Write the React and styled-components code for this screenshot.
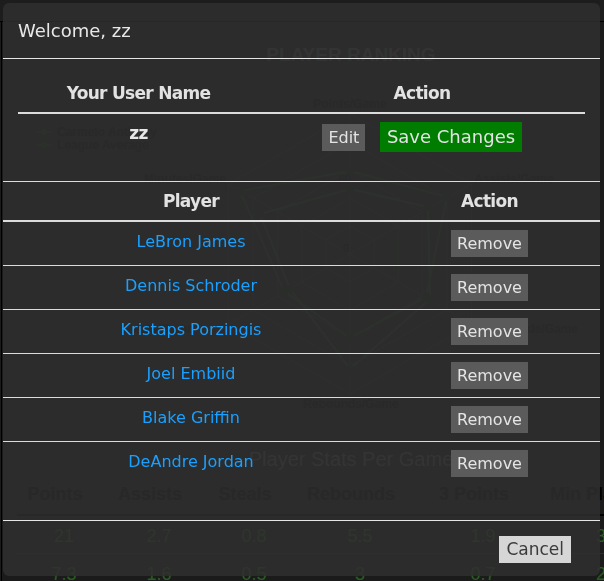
import React from 'react';
import styled, { createGlobalStyle } from 'styled-components';

const GlobalStyle = createGlobalStyle`
  html, body {
    margin: 0;
    padding: 0;
    height: 100%;
    overflow: hidden;
    background: #363636;
  }
  body {
    font-family: "DejaVu Sans", Verdana, sans-serif;
  }
  * { box-sizing: border-box; }
`;

/* ---------- page behind the modal ---------- */

const Page = styled.div`
  width: 700px;
  min-height: 600px;
`;

const NavBar = styled.div`
  height: 22px;
  background: #3a3a3a;
  border-bottom: 1px solid #000;
`;

const Main = styled.main`
  margin-left: 1px;
  border-left: 1px solid #000;
  padding: 0 15px;
  min-height: 578px;
  font-family: "Liberation Sans", Arial, sans-serif;
`;

const RankingTitle = styled.h2`
  margin: 0;
  padding-top: 22px;
  height: 44px;
  line-height: 22px;
  text-align: center;
  font-size: 19px;
  font-weight: bold;
  color: #a0a0a0;
`;

const ChartSvg = styled.svg`
  display: block;
  width: 668px;
  height: 370px;
`;

const StatsTitle = styled.h3`
  margin: 11px 0 0;
  line-height: 24px;
  text-align: center;
  font-size: 20px;
  font-weight: normal;
  color: #a8a8a8;
`;

const StatsGrid = styled.div`
  display: grid;
  grid-template-columns: 94px 96px 94px 118px 128px 118px;
`;

const StatsHead = styled.div`
  padding: 11px 18px 8px 0;
  line-height: 24px;
  text-align: center;
  white-space: nowrap;
  font-size: 18px;
  font-weight: bold;
  color: #000;
  border-bottom: 2px solid #000;
`;

const StatsValue = styled.div`
  padding: 9px 0 6px;
  line-height: 22px;
  text-align: center;
  font-size: 18px;
  color: #55b845;
  border-bottom: 1px solid #5a5a5a;
`;

const R = 140;
const CX = 333;
const CY = 188;
const ring = (r) =>
  [-90, -30, 30, 90, 150, 210]
    .map((a) => {
      const t = (a * Math.PI) / 180;
      return `${(CX + r * Math.cos(t)).toFixed(1)},${(CY + r * Math.sin(t)).toFixed(1)}`;
    })
    .join(' ');

const playerPts = [[333, 105], [430, 131], [409, 231], [333, 272], [267, 225], [223, 125]];
const leaguePts = [[333, 123], [411, 141], [413, 233], [333, 303], [273, 223], [243, 148]];

function RadarChart() {
  return (
    <ChartSvg viewBox="0 0 668 370">
      {[28, 56, 84, 112, 140].map((r) => (
        <polygon key={r} points={ring(r)} fill="none" stroke="#4e604e" strokeWidth="1" />
      ))}
      {ring(R).split(' ').map((p) => {
        const [x, y] = p.split(',');
        return <line key={p} x1={CX} y1={CY} x2={x} y2={y} stroke="#4e604e" strokeWidth="1" />;
      })}
      <polygon points={leaguePts.map((p) => p.join(',')).join(' ')} fill="none" stroke="#4f7f4f" strokeWidth="2" />
      <polygon points={playerPts.map((p) => p.join(',')).join(' ')} fill="none" stroke="#3c7a3c" strokeWidth="2" />
      {[...playerPts, ...leaguePts].map(([x, y], i) => (
        <circle key={i} cx={x} cy={y} r="4" fill="#1f4f1f" />
      ))}
      <g fontFamily="Liberation Sans, Arial, sans-serif" fontSize="12" fontWeight="bold" fill="#101010">
        <text x="333" y="42" textAnchor="middle">Points/Game</text>
        <text x="168" y="117" textAnchor="middle">Minutes/Game</text>
        <text x="497" y="117" textAnchor="middle">Assists/Game</text>
        <text x="561" y="267" textAnchor="end">Threes Made/Game</text>
        <text x="105" y="267">Steals/Game</text>
        <text x="334" y="342" textAnchor="middle">Rebounds/Game</text>
        <text x="322" y="117" fontWeight="normal" fontSize="11">60</text>
        <text x="326" y="186" fontWeight="normal" fontSize="11">0</text>
        <line x1="20" y1="66" x2="35" y2="66" stroke="#2f6f2f" strokeWidth="2" />
        <circle cx="27.5" cy="66" r="3" fill="#2f6f2f" />
        <text x="40" y="70">Carmelo Anthony</text>
        <line x1="20" y1="79" x2="35" y2="79" stroke="#2f6f2f" strokeWidth="2" />
        <circle cx="27.5" cy="79" r="3" fill="#2f6f2f" />
        <text x="40" y="83">League Average</text>
      </g>
    </ChartSvg>
  );
}

const statHeads = ['Points', 'Assists', 'Steals', 'Rebounds', '3 Points', 'Min Played'];
const statRows = [
  ['21', '2.7', '0.8', '5.5', '1.9', '32'],
  ['7.3', '1.6', '0.5', '3', '0.7', '20'],
];

/* ---------- modal ---------- */

const Backdrop = styled.div`
  position: fixed;
  inset: 0;
  background: rgba(0, 0, 0, 0.5);
  padding: 3px 4px 5px 3px;
`;

const Dialog = styled.div`
  width: 597px;
  background: rgba(46, 46, 46, 0.86);
  border-radius: 6px;
  color: #e2e2e2;
  font-family: "DejaVu Sans", Verdana, sans-serif;
`;

const DialogHeader = styled.div`
  padding: 15px;
  border-bottom: 1px solid #e6e6e6;
`;

const Title = styled.h4`
  margin: 0;
  font-size: 18px;
  line-height: 25px;
  font-weight: normal;
  color: #e8e8e8;
`;

const UserSection = styled.div`
  padding: 15px 15px 21px;
`;

const Table = styled.div`
  display: grid;
  grid-template-columns: ${(p) => p.$cols};
`;

const HeadCell = styled.div`
  padding: 8px 8px 7px;
  line-height: 23px;
  text-align: center;
  font-size: 17px;
  font-weight: bold;
  letter-spacing: -0.7px;
  color: #e2e2e2;
  border-bottom: 2px solid #dcdcdc;
`;

const Cell = styled.div`
  display: flex;
  justify-content: center;
  align-items: ${(p) => (p.$middle ? 'center' : 'flex-start')};
  gap: 15px;
  padding: 8px;
  line-height: 23px;
  border-top: ${(p) => (p.$lined ? '1px solid #dcdcdc' : 'none')};
`;

const UserName = styled.span`
  font-size: 17px;
  font-weight: bold;
  letter-spacing: -0.7px;
  color: #e6e6e6;
`;

const Button = styled.button`
  border: 0;
  border-radius: 0;
  margin: 0;
  font-family: inherit;
  cursor: pointer;
  background: ${(p) => (p.$variant === 'save' ? '#007d00' : p.$variant === 'cancel' ? '#d6d6d6' : '#5b5b5b')};
  color: ${(p) => (p.$variant === 'cancel' ? '#3a3a3a' : '#e4e4e4')};
  font-size: ${(p) => (p.$variant === 'save' ? '18px' : p.$variant === 'cancel' ? '17px' : '16px')};
  height: ${(p) => (p.$variant === 'save' ? '30px' : '27px')};
  line-height: ${(p) => (p.$variant === 'save' ? '30px' : '27px')};
  padding: 0 ${(p) => (p.$variant === 'save' ? '6.5px' : p.$variant === 'cancel' ? '7px' : '6px')};
`;

const PlayerSection = styled.div`
  border-top: 1px solid #dcdcdc;
  margin-bottom: 35px;
`;

const PlayerLink = styled.a`
  font-size: 16px;
  color: #1aa0ff;
  text-decoration: none;
`;

const DialogFooter = styled.div`
  display: flex;
  justify-content: flex-end;
  padding: 15px 29px 13px 15px;
  border-top: 1px solid #e6e6e6;
`;

const players = [
  'LeBron James',
  'Dennis Schroder',
  'Kristaps Porzingis',
  'Joel Embiid',
  'Blake Griffin',
  'DeAndre Jordan',
];

export default function App() {
  return (
    <>
      <GlobalStyle />
      <Page>
        <NavBar />
        <Main>
          <RankingTitle>PLAYER RANKING</RankingTitle>
          <RadarChart />
          <StatsTitle>Player Stats Per Game</StatsTitle>
          <StatsGrid>
            {statHeads.map((h) => (
              <StatsHead key={h}>{h}</StatsHead>
            ))}
            {statRows.map((row, i) =>
              row.map((v, j) => <StatsValue key={`${i}-${j}`}>{v}</StatsValue>)
            )}
          </StatsGrid>
        </Main>
      </Page>

      <Backdrop>
        <Dialog>
          <DialogHeader>
            <Title>Welcome, zz</Title>
          </DialogHeader>

          <UserSection>
            <Table $cols="241px 1fr">
              <HeadCell>Your User Name</HeadCell>
              <HeadCell>Action</HeadCell>
              <Cell>
                <UserName>zz</UserName>
              </Cell>
              <Cell $middle>
                <Button>Edit</Button>
                <Button $variant="save">Save Changes</Button>
              </Cell>
            </Table>
          </UserSection>

          <PlayerSection>
            <Table $cols="376px 1fr">
              <HeadCell>Player</HeadCell>
              <HeadCell>Action</HeadCell>
              {players.map((name, i) => (
                <React.Fragment key={name}>
                  <Cell $lined={i > 0}>
                    <PlayerLink href="#">{name}</PlayerLink>
                  </Cell>
                  <Cell $lined={i > 0} $middle>
                    <Button>Remove</Button>
                  </Cell>
                </React.Fragment>
              ))}
            </Table>
          </PlayerSection>

          <DialogFooter>
            <Button $variant="cancel">Cancel</Button>
          </DialogFooter>
        </Dialog>
      </Backdrop>
    </>
  );
}
